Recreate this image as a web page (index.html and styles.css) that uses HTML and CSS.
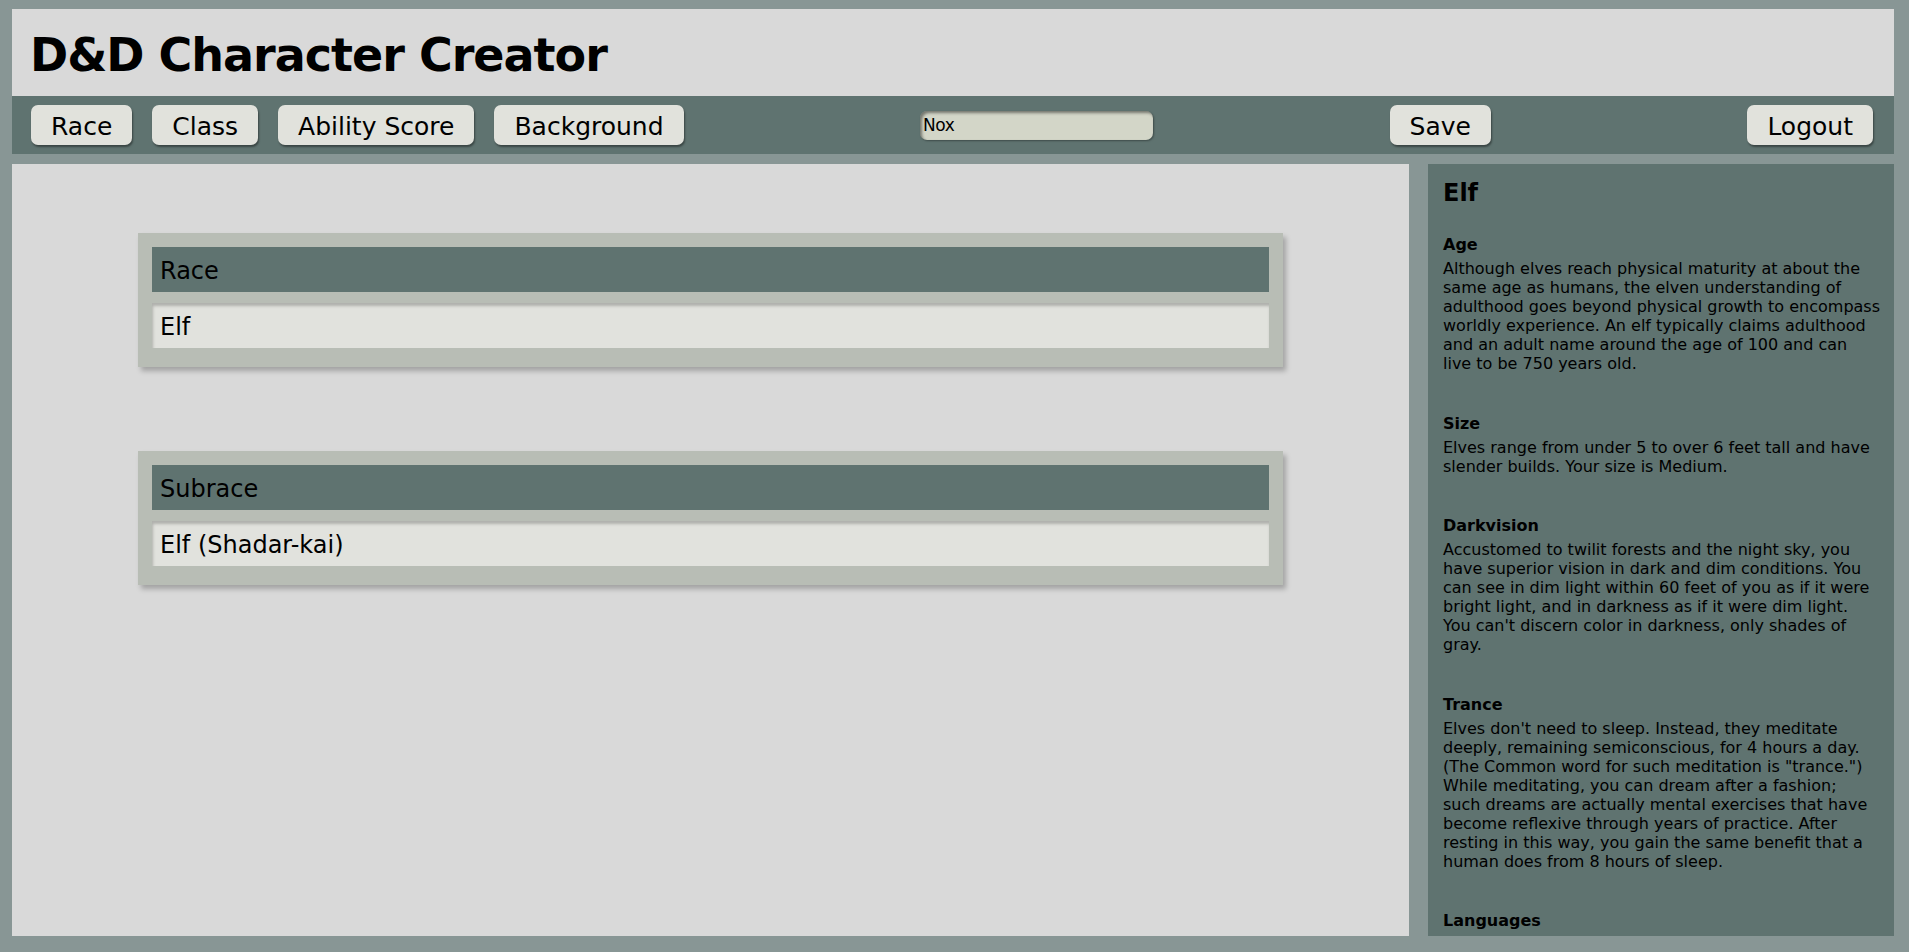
FILE: index.html
```html
<!DOCTYPE html>
<html lang="en">
<head>
<meta charset="utf-8">
<title>D&amp;D Character Creator</title>
<link rel="stylesheet" href="styles.css">
</head>
<body>
<div class="page">
  <header class="top">
    <h1 class="title">D&amp;D Character Creator</h1>
  </header>
  <nav class="nav">
    <div class="tabs">
      <button class="btn">Race</button>
      <button class="btn">Class</button>
      <button class="btn">Ability Score</button>
      <button class="btn">Background</button>
    </div>
    <div class="name-input">Nox</div>
    <button class="btn save">Save</button>
    <button class="btn">Logout</button>
  </nav>
  <main class="main">
    <section class="builder">
      <div class="card">
        <div class="card-head">Race</div>
        <div class="card-field">Elf</div>
      </div>
      <div class="card">
        <div class="card-head">Subrace</div>
        <div class="card-field">Elf (Shadar-kai)</div>
      </div>
    </section>
    <aside class="info">
      <h2 class="info-title">Elf</h2>
      <div class="trait">
        <h3 class="trait-name">Age</h3>
        <p class="trait-text">Although elves reach physical maturity at about the<br>same age as humans, the elven understanding of<br>adulthood goes beyond physical growth to encompass<br>worldly experience. An elf typically claims adulthood<br>and an adult name around the age of 100 and can<br>live to be 750 years old.</p>
      </div>
      <div class="trait">
        <h3 class="trait-name">Size</h3>
        <p class="trait-text">Elves range from under 5 to over 6 feet tall and have<br>slender builds. Your size is Medium.</p>
      </div>
      <div class="trait">
        <h3 class="trait-name">Darkvision</h3>
        <p class="trait-text">Accustomed to twilit forests and the night sky, you<br>have superior vision in dark and dim conditions. You<br>can see in dim light within 60 feet of you as if it were<br>bright light, and in darkness as if it were dim light.<br>You can't discern color in darkness, only shades of<br>gray.</p>
      </div>
      <div class="trait">
        <h3 class="trait-name">Trance</h3>
        <p class="trait-text">Elves don't need to sleep. Instead, they meditate<br>deeply, remaining semiconscious, for 4 hours a day.<br>(The Common word for such meditation is "trance.")<br>While meditating, you can dream after a fashion;<br>such dreams are actually mental exercises that have<br>become reflexive through years of practice. After<br>resting in this way, you gain the same benefit that a<br>human does from 8 hours of sleep.</p>
      </div>
      <div class="trait">
        <h3 class="trait-name">Languages</h3>
      </div>
    </aside>
  </main>
</div>
</body>
</html>
```

FILE: styles.css
```css
* {
  box-sizing: border-box;
}

html, body {
  margin: 0;
  padding: 0;
  height: 100%;
}

body {
  background: #889695;
  color: #000;
  font-family: "DejaVu Sans", Verdana, sans-serif;
}

.page {
  height: 100vh;
  padding: 9px 15px 16px 12px;
  display: flex;
  flex-direction: column;
  overflow: hidden;
}

.top {
  height: 87px;
  flex: none;
  background: #d9d9d9;
  padding: 19px 18px 0;
}

.title {
  margin: 0;
  font-size: 46px;
  line-height: 54px;
  font-weight: bold;
  letter-spacing: -1px;
}

.nav {
  height: 58px;
  flex: none;
  background: #5f7370;
  display: flex;
  align-items: center;
  justify-content: space-between;
  padding: 0 21px 0 19px;
}

.tabs {
  display: flex;
  gap: 20px;
}

.btn {
  height: 40px;
  padding: 7px 20px 0;
  border: none;
  border-radius: 7px;
  background: #e1e2dc;
  box-shadow: 1px 2px 2px rgba(0, 0, 0, 0.4);
  font-family: "DejaVu Sans", Verdana, sans-serif;
  font-size: 25px;
  line-height: 29px;
  color: #000;
  display: flex;
  align-items: flex-start;
}

.save {
  margin-right: 20px;
}

.name-input {
  width: 233px;
  height: 29px;
  border-radius: 7px;
  background: #d3d6c8;
  box-shadow: inset 2px 2px 3px rgba(0, 0, 0, 0.45), 1px 1px 2px rgba(0, 0, 0, 0.35);
  font-size: 17px;
  line-height: 29px;
  padding-left: 3px;
  letter-spacing: -0.5px;
}

.main {
  flex: 1;
  min-height: 0;
  margin-top: 10px;
  display: flex;
  gap: 19px;
}

.builder {
  flex: 1;
  background: #d9d9d9;
  padding-top: 69px;
  display: flex;
  flex-direction: column;
  align-items: center;
  gap: 84px;
}

.card {
  width: 1145px;
  background: #b8bdb5;
  padding: 14px 14px 19px;
  box-shadow: 3px 4px 5px rgba(0, 0, 0, 0.25);
}

.card-head {
  height: 45px;
  background: #5f7370;
  padding: 10px 8px 0;
  font-size: 24px;
  line-height: 28px;
}

.card-field {
  height: 45px;
  margin-top: 11px;
  background: #e1e2dd;
  box-shadow: inset 1px 3px 3px rgba(0, 0, 0, 0.22);
  padding: 10px 8px 0;
  font-size: 24px;
  line-height: 28px;
}

.info {
  width: 466px;
  flex: none;
  background: #5f7370;
  padding: 15px 10px 0 15px;
  overflow: hidden;
}

.info-title {
  margin: 0 0 28px;
  font-size: 24px;
  line-height: 28px;
  font-weight: bold;
}

.trait {
  margin-bottom: 40.5px;
}

.trait-name {
  margin: 0 0 5px;
  font-size: 16px;
  line-height: 19px;
  font-weight: bold;
}

.trait-text {
  margin: 0;
  font-size: 16px;
  line-height: 19px;
  white-space: nowrap;
}
```
